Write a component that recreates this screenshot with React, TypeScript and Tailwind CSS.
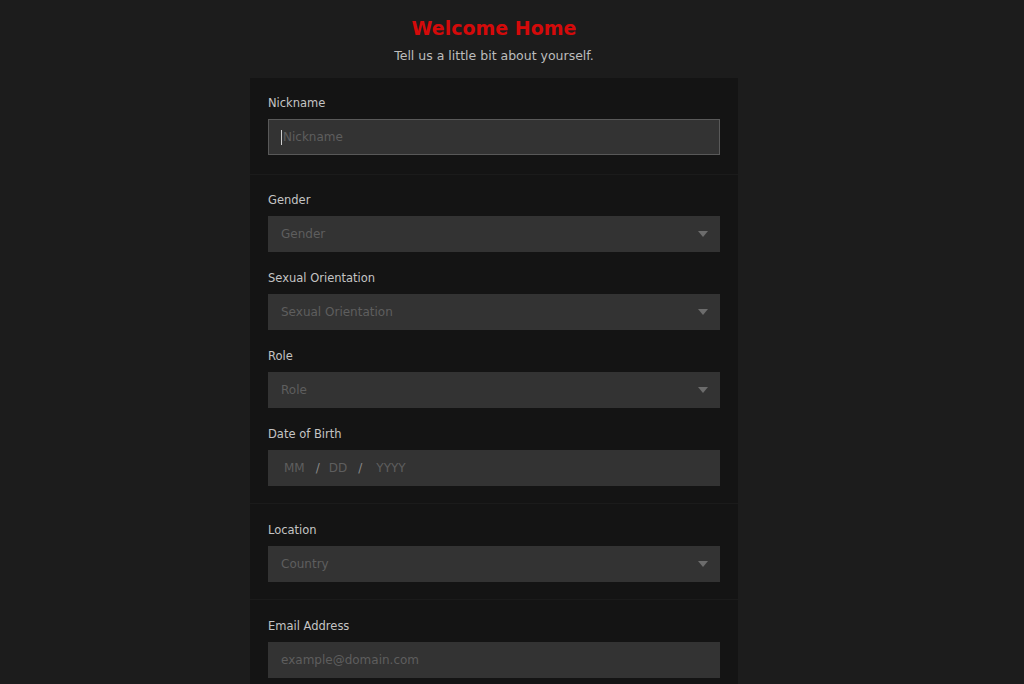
import React from "react";

const font = { fontFamily: '"DejaVu Sans", "Liberation Sans", sans-serif' };

function Caret() {
  return (
    <svg width="10" height="6" viewBox="0 0 10 6" className="shrink-0">
      <path d="M0 0 L10 0 L5 6 Z" fill="#6c6c6c" />
    </svg>
  );
}

function Label({ children }: { children: React.ReactNode }) {
  return <div className="text-[11.5px] leading-4 text-[#c4c4c4] mb-2">{children}</div>;
}

function SelectField({ label, placeholder }: { label: string; placeholder: string }) {
  return (
    <div>
      <Label>{label}</Label>
      <div className="h-9 bg-[#333333] flex items-center justify-between pl-[13px] pr-[12px]">
        <span className="text-[12px] text-[#5e5e5e]">{placeholder}</span>
        <Caret />
      </div>
    </div>
  );
}

export default function App() {
  return (
    <div className="h-screen w-full bg-[#1c1c1c] overflow-hidden pr-[36px]" style={font}>
      <div className="flex flex-col items-center pt-[15px]">
        <h1 className="text-[19px] leading-[26px] font-bold text-[#d40a0a]">Welcome Home</h1>
        <p className="mt-[7px] text-[12.5px] leading-4 text-[#bdbdbd]">Tell us a little bit about yourself.</p>
      </div>
      <div className="mx-auto mt-[14px] w-[488px] bg-[#141414] h-[700px]">
        <div className="px-[18px] pt-[17px] pb-[19px] border-b border-[#1b1b1b]">
          <Label>Nickname</Label>
          <div className="h-9 bg-[#333333] border border-[#595959] flex items-center pl-[12px]">
            <span className="w-px h-[15px] bg-[#cfcfcf] mr-px" />
            <span className="text-[12px] text-[#5e5e5e]">Nickname</span>
          </div>
        </div>
        <div className="px-[18px] pt-[17px] pb-[17px] border-b border-[#1b1b1b] flex flex-col gap-[18px]">
          <SelectField label="Gender" placeholder="Gender" />
          <SelectField label="Sexual Orientation" placeholder="Sexual Orientation" />
          <SelectField label="Role" placeholder="Role" />
          <div>
            <Label>Date of Birth</Label>
            <div className="h-9 bg-[#333333] flex items-center pl-[16px] text-[12px] text-[#5e5e5e]">
              <span>MM</span>
              <span className="ml-[11px] text-[#8a8a8a]">/</span>
              <span className="ml-[9px]">DD</span>
              <span className="ml-[11px] text-[#8a8a8a]">/</span>
              <span className="ml-[14px]">YYYY</span>
            </div>
          </div>
        </div>
        <div className="px-[18px] pt-[18px] pb-[17px] border-b border-[#1b1b1b]">
          <SelectField label="Location" placeholder="Country" />
        </div>
        <div className="px-[18px] pt-[18px] pb-[17px]">
          <Label>Email Address</Label>
          <div className="h-9 bg-[#333333] flex items-center pl-[13px]">
            <span className="text-[12px] text-[#5e5e5e]">example@domain.com</span>
          </div>
        </div>
      </div>
    </div>
  );
}
